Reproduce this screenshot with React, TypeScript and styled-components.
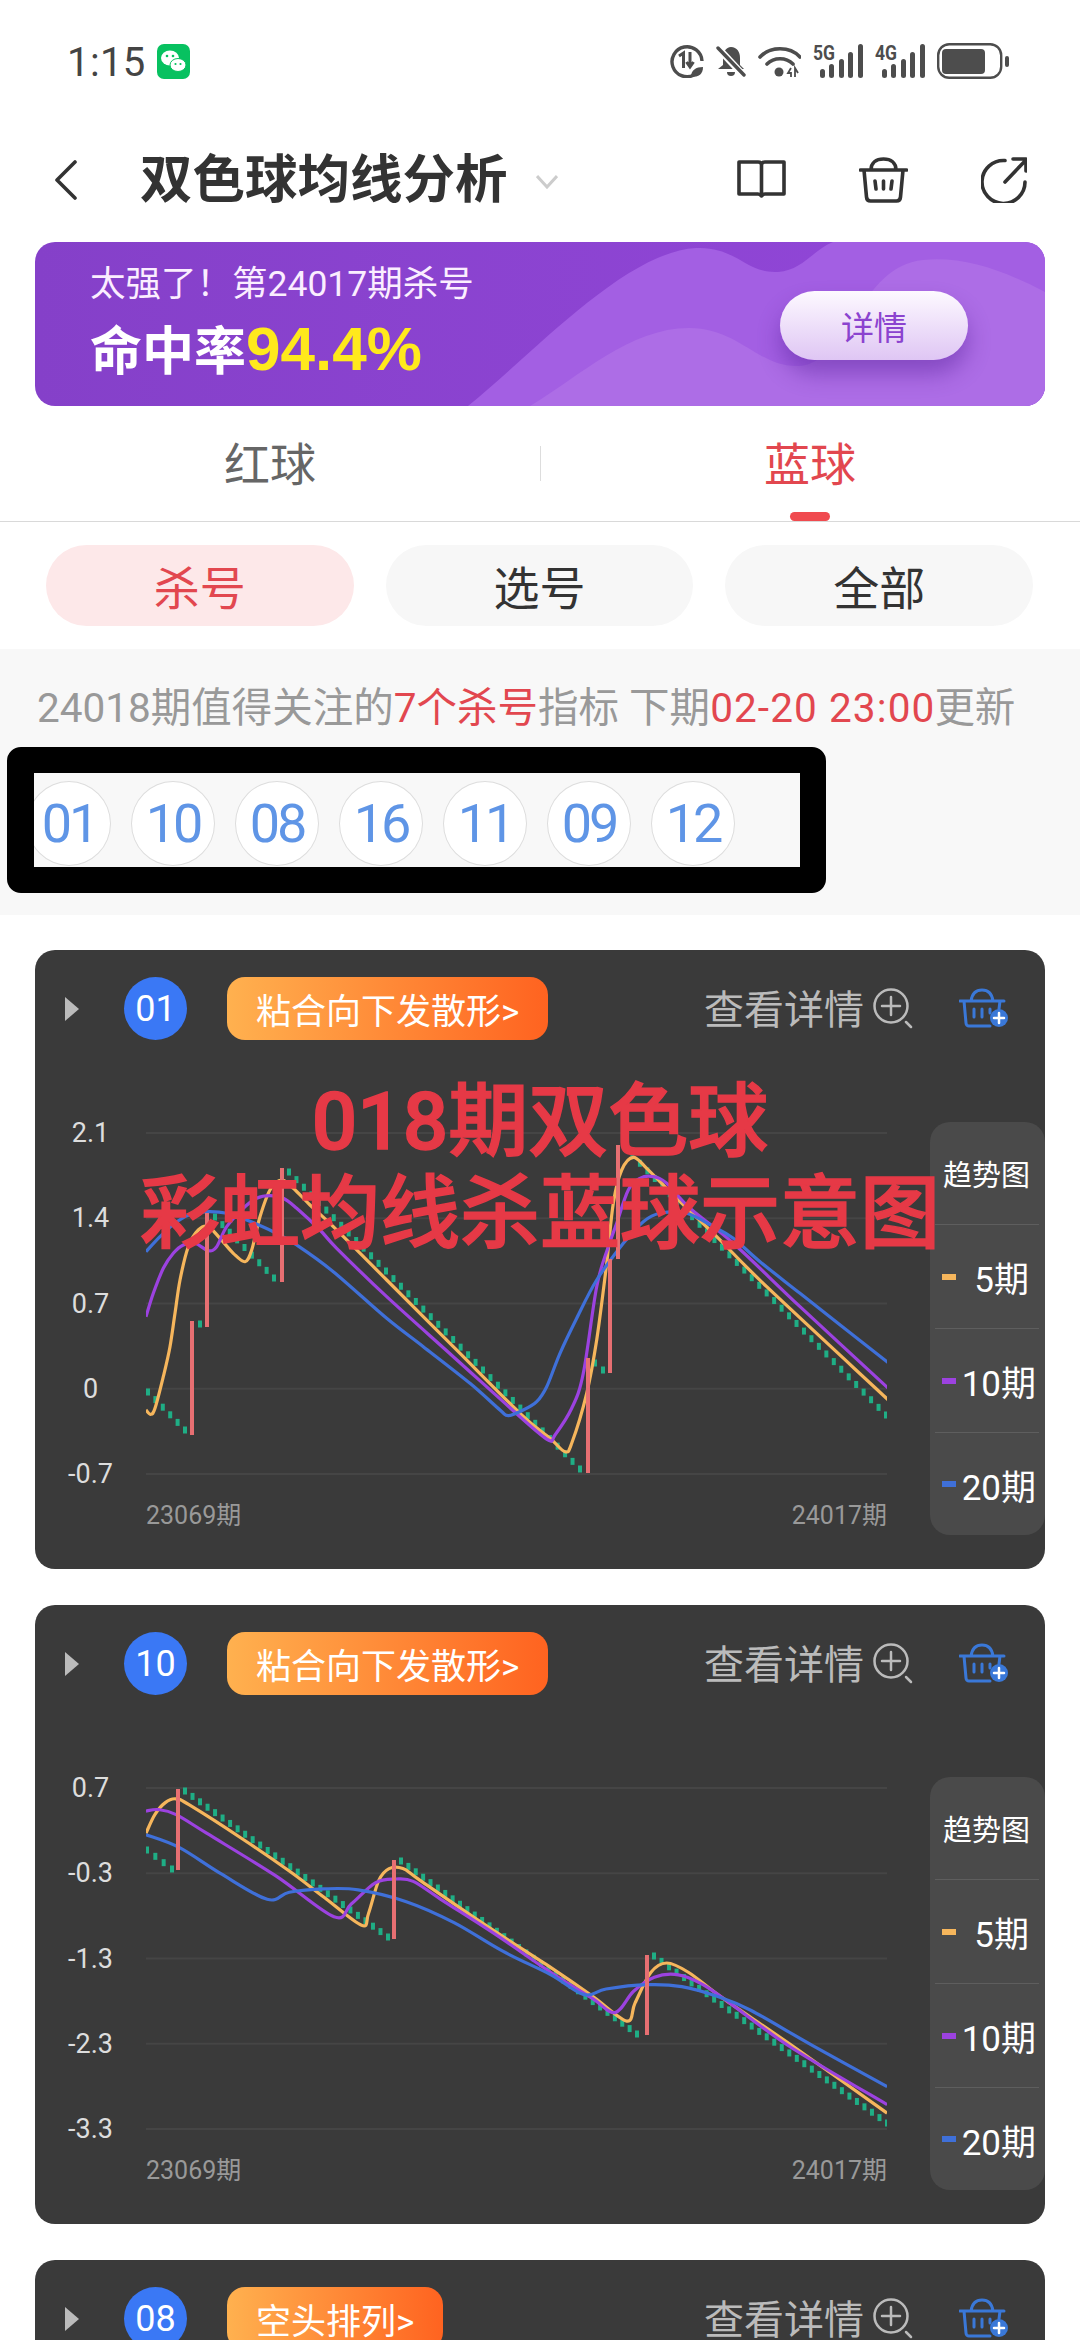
import React from "react";
import styled, { createGlobalStyle } from "styled-components";

const Global = createGlobalStyle`
  html, body { margin: 0; padding: 0; background: #fff; }
  body { width: 1080px; height: 2340px; overflow: hidden; font-family: Roboto, "Noto Sans CJK SC", sans-serif; }
  * { box-sizing: border-box; }
`;

const Page = styled.div`width: 1080px; height: 2340px; overflow: hidden; background: #fff;`;

const StatusBar = styled.div`height: 122px; display: flex; align-items: center; padding: 0 71px 0 67px; color: #444;`;
const Time = styled.span`font-size: 40px; line-height: 1; padding-top: 3px; letter-spacing: .4px;`;
const WeChat = styled.svg`width: 33px; height: 35px; margin-left: 11px; display: block;`;
const StatusIcons = styled.div`margin-left: auto; display: flex; align-items: center; gap: 12px;`;
const Signal = styled.svg`display: block; margin-top: -6px;`;

const Nav = styled.div`height: 120px; display: flex; align-items: center; padding: 0 53px 4px 54px; color: #333;`;
const Title = styled.h1`margin: 0 0 0 62px; font-size: 52.5px; line-height: 60px; font-weight: 700; color: #333;`;
const DownArrow = styled.svg`margin-left: 28px; width: 22px; height: 14px; margin-top: 4px;`;
const NavIcons = styled.div`margin-left: auto; display: flex; align-items: center; gap: 73px;`;

const Banner = styled.div`
  position: relative; height: 164px; margin: 0 35px; border-radius: 20px; overflow: hidden;
  background: linear-gradient(90deg, #8540c9, #9247d9);
`;
const BannerArt = styled.svg`position: absolute; inset: 0; width: 100%; height: 100%;`;
const BannerText = styled.div`position: absolute; left: 55px; top: 21px; color: #fff;`;
const BannerLine = styled.div`font-size: 35.5px; line-height: 42px; color: #fbeeff;`;
const BannerRate = styled.div`font-size: 52px; line-height: 62px; font-weight: 700; margin-top: 13px; color: #fff;`;
const Yellow = styled.span`color: #ffe91c; font-family: "Liberation Sans", sans-serif; font-size: 62px;`;
const BannerButton = styled.div`
  position: absolute; left: 745px; top: 49px; width: 188px; height: 69px; border-radius: 35px;
  display: flex; align-items: center; justify-content: center; color: #8b43cf; font-size: 33px;
  background: linear-gradient(180deg, #fdf9ff, #dfc6f4); box-shadow: 0 14px 22px rgba(84, 30, 150, .45);
`;

const Tabs = styled.div`height: 116px; display: grid; grid-template-columns: 1fr 1fr; border-bottom: 1px solid #d9d9d9; position: relative;`;
const Tab = styled.div<{ $on?: boolean }>`
  position: relative; display: flex; justify-content: center; padding-top: 29px;
  font-size: 46px; line-height: 60px; color: ${p => (p.$on ? "#e2474f" : "#666")};
`;
const TabDivider = styled.i`position: absolute; left: 540px; top: 40px; width: 1px; height: 35px; background: #ddd;`;
const TabMark = styled.i`position: absolute; left: 50%; bottom: 0; transform: translateX(-50%); width: 40px; height: 9px; border-radius: 5px; background: #f04a4f;`;

const Filters = styled.div`display: flex; gap: 32px; padding: 23px 47px 23px 46px;`;
const Filter = styled.div<{ $on?: boolean }>`
  flex: 1; height: 81px; border-radius: 41px; display: flex; align-items: center; justify-content: center;
  font-size: 46px; padding-bottom: 2px; color: ${p => (p.$on ? "#e2474f" : "#333")}; background: ${p => (p.$on ? "#fde8e9" : "#f7f7f7")};
`;

const Notice = styled.section`height: 266px; background: #f8f8f8; padding: 35px 0 0 7px;`;
const NoticeText = styled.div`margin-left: 30px; font-size: 40.5px; line-height: 48px; color: #999; white-space: nowrap;`;
const Red = styled.span`color: #e2474f;`;
const RedTime = styled(Red)`letter-spacing: 1.1px; margin-right: -1px;`;
const Censor = styled.div`
  margin-top: 15px; width: 819px; height: 146px; border: solid #000; border-width: 26px 26px 26px 27px;
  border-radius: 14px; background: #f8f8f8; overflow: hidden;
`;
const Numbers = styled.div`display: flex; gap: 20px; margin: 8px 0 0 -7px;`;
const Num = styled.div`
  width: 84px; height: 85px; flex: none; border-radius: 50%; background: #fff; border: 1px solid #ddd;
  display: flex; align-items: center; justify-content: center; color: #5f95e6; font-size: 54px; letter-spacing: -3px;
`;

const Cards = styled.div`display: flex; flex-direction: column; gap: 36px; padding: 35px 35px 0;`;
const Card = styled.article`
  position: relative; flex: none; background: #3a3a3a; border-radius: 20px; padding: 27px 0 39px;
`;
const CardHead = styled.div`height: 63px; display: flex; align-items: center; padding-left: 30px;`;
const Caret = styled.i`width: 0; height: 0; border-left: 14px solid #bbb; border-top: 12px solid transparent; border-bottom: 12px solid transparent;`;
const Ball = styled.div`
  width: 63px; height: 63px; margin-left: 45px; border-radius: 50%; background: #3a78f5; color: #fff;
  display: flex; align-items: center; justify-content: center; font-size: 36px;
`;
const Tag = styled.div`
  margin-left: 40px; height: 63px; padding: 0 29px; border-radius: 18px; color: #fff; font-size: 35px;
  display: flex; align-items: center; background: linear-gradient(90deg, #ffb14f, #ff6320);
`;
const Detail = styled.div`margin-left: auto; display: flex; align-items: center; color: #bbb; font-size: 40px;`;
const DetailText = styled.span`margin-top: -3px;`;
const HeadIcon = styled.svg`display: block; flex: none;`;
const Basket = styled(HeadIcon)`margin: 0 36px 0 44px;`;
const Zoom = styled(HeadIcon)`margin-left: 9px;`;

const CardBody = styled.div`
  margin-top: 77px; display: grid; grid-template-columns: 111px 741px 43px 115px;
  grid-template-rows: 373px 40px;
`;
const YAxis = styled.div`display: flex; flex-direction: column; justify-content: space-between; align-items: center;`;
const YLabel = styled.div`width: 111px; text-align: center; font-size: 27px; line-height: 32px; color: #ddd;`;
const Chart = styled.svg`display: block; width: 741px; height: 373px;`;
const Legend = styled.aside`
  grid-column: 4; grid-row: 1 / span 2; margin-top: 5px; height: 413px; background: #4a4a4a; border-radius: 20px;
  display: grid; grid-template-rows: 102px 104px 104px 103px; padding: 0 6px 0 5px;
`;
const LegendTitle = styled.div`display: flex; align-items: center; justify-content: center; color: #fff; font-size: 29px; padding-right: 1px;`;
const LegendRow = styled.div`position: relative; display: flex; align-items: center; justify-content: flex-end; border-top: 1px solid #5e5e5e; color: #fff; font-size: 35px; padding-right: 3px;`;
const FiveLabel = styled.span`padding-right: 7px;`;
const Swatch = styled.i<{ $c: string }>`position: absolute; left: 7px; top: 50%; width: 14px; height: 6px; margin-top: -3px; background: ${p => p.$c};`;
const XLabels = styled.div`grid-column: 2; grid-row: 2; margin-top: 12px; display: flex; justify-content: space-between; color: #999; font-size: 25px; line-height: 28px;`;

const Overlay = styled.div`
  position: absolute; left: 0; right: 0; top: 126px; text-align: center; color: #e63946;
  font-size: 80px; line-height: 92px; font-weight: 500; pointer-events: none; white-space: nowrap;
  -webkit-text-stroke: 1.5px #e63946;
`;

type P = number[][];
const z6 = (a: P): P => a.map(([x, y]) => [120 + x / 3 - 146, 1080 + y / 3 - 1117]);
const z7 = (a: P): P => a.map(([x, y]) => [500 + x / 3 - 146, 1080 + y / 3 - 1117]);
const z4 = (a: P): P => a.map(([x, y]) => [x / 1.452 - 146, 1600 + y / 2.119 - 1770]);

const smooth = (p: P) => {
  let d = `M${p[0][0].toFixed(1)} ${p[0][1].toFixed(1)}`;
  for (let i = 0; i < p.length - 1; i++) {
    const a = p[Math.max(i - 1, 0)], b = p[i], c = p[i + 1], e = p[Math.min(i + 2, p.length - 1)];
    d += `C${(b[0] + (c[0] - a[0]) / 6).toFixed(1)} ${(b[1] + (c[1] - a[1]) / 6).toFixed(1)} ${(c[0] - (e[0] - b[0]) / 6).toFixed(1)} ${(c[1] - (e[1] - b[1]) / 6).toFixed(1)} ${c[0].toFixed(1)} ${c[1].toFixed(1)}`;
  }
  return d;
};

interface Data { o: number; yellow: P; purple: P; blue: P; green: number[][]; red: number[][]; labels: string[] }

const card1: Data = {
  o: 1117,
  labels: ["2.1", "1.4", "0.7", "0", "-0.7"],
  yellow: [
    ...z6([[78, 990], [92, 1003], [105, 985], [130, 890], [150, 800], [165, 700], [180, 600], [205, 500], [235, 450], [265, 440], [300, 475], [340, 520], [375, 545], [395, 510], [420, 410], [450, 330], [485, 300], [520, 325], [570, 375], [640, 440], [800, 600], [1000, 800]]),
    ...z7([[60, 1000], [150, 1075], [195, 1115], [215, 1090], [260, 940], [290, 780], [320, 550], [340, 370], [365, 270], [400, 232], [440, 265], [530, 355], [650, 470], [800, 620], [1165, 960]]),
  ],
  purple: [
    ...z6([[78, 710], [100, 640], [130, 565], [160, 520], [190, 495], [225, 490], [265, 512], [290, 500], [320, 440], [370, 385], [410, 355], [450, 347], [490, 355], [530, 385], [600, 450], [650, 505], [800, 650], [1000, 830]]),
    ...z7([[60, 1010], [145, 1080], [165, 1065], [215, 985], [250, 880], [290, 620], [325, 500], [350, 430], [385, 330], [420, 295], [460, 290], [500, 310], [570, 385], [700, 490], [900, 680], [1165, 925]]),
  ],
  blue: [
    ...z6([[78, 515], [120, 470], [170, 425], [220, 400], [270, 395], [320, 400], [380, 420], [460, 455], [530, 495], [640, 575], [800, 715], [910, 800], [1050, 910], [1140, 990], [1165, 1007]]),
    ...z7([[70, 990], [110, 965], [140, 920], [180, 820], [230, 715], [290, 600], [370, 490], [430, 425], [480, 400], [560, 400], [640, 440], [700, 475], [780, 545], [900, 640], [1165, 848]]),
  ],
  green: [[148, 1392, 185, 1430], [200, 1324, 200, 1324], [215, 1217, 274, 1278], [289, 1172, 580, 1469], [595, 1363, 603, 1370], [625, 1148, 886, 1415]],
  red: [[192, 1321, 1435], [207, 1213, 1327], [282, 1168, 1282], [588, 1358, 1473], [610, 1259, 1373], [618, 1145, 1259]],
};

const card2: Data = {
  o: 1770,
  labels: ["0.7", "-0.3", "-1.3", "-2.3", "-3.3"],
  yellow: z4([[212, 490], [225, 450], [240, 425], [255, 417], [275, 430], [350, 500], [420, 570], [470, 625], [525, 685], [535, 660], [550, 590], [565, 565], [585, 565], [610, 590], [700, 680], [800, 775], [860, 835], [910, 888], [922, 850], [945, 785], [968, 765], [1000, 785], [1050, 840], [1150, 940], [1288, 1083]]),
  purple: z4([[212, 443], [230, 440], [255, 450], [300, 490], [400, 580], [485, 667], [510, 640], [545, 595], [575, 587], [600, 592], [640, 630], [720, 705], [800, 785], [860, 840], [893, 870], [920, 825], [950, 795], [985, 790], [1020, 810], [1060, 850], [1150, 945], [1288, 1065]]),
  blue: z4([[212, 493], [260, 520], [320, 575], [388, 630], [420, 615], [470, 608], [520, 610], [590, 635], [660, 680], [730, 740], [800, 790], [848, 832], [880, 820], [940, 811], [990, 815], [1040, 835], [1090, 865], [1180, 940], [1288, 1027]]),
  green: [[147, 1848, 172, 1867], [185, 1789, 388, 1935], [401, 1859, 637, 2032], [654, 1954, 887, 2121]],
  red: [[178, 1787, 1868], [394, 1858, 1937], [647, 1953, 2033]],
};

const ChartSvg = ({ d }: { d: Data }) => {
  const rects: React.ReactNode[] = [];
  d.green.forEach(([x0, y0, x1, y1], r) => {
    const n = Math.max(Math.round((x1 - x0) / 7.43), 0);
    for (let i = 0; i <= n; i++) {
      const t = n ? i / n : 0;
      rects.push(<rect key={`${r}-${i}`} x={x0 + (x1 - x0) * t - 2 - 146} y={y0 + (y1 - y0) * t - 3.5 - d.o} width={4} height={7} fill="#1fae85" />);
    }
  });
  return (
    <Chart viewBox="0 0 741 373">
      {[0, 1, 2, 3, 4].map(i => <line key={i} x1={0} x2={741} y1={16 + i * 85.25} y2={16 + i * 85.25} stroke="#454545" strokeWidth={2} />)}
      {rects}
      <path d={smooth(d.yellow)} fill="none" stroke="#f6b65c" strokeWidth={3.2} />
      <path d={smooth(d.purple)} fill="none" stroke="#9c42e0" strokeWidth={3.2} />
      <path d={smooth(d.blue)} fill="none" stroke="#3f70d9" strokeWidth={3.2} />
      {d.red.map(([x, a, b]) => <rect key={x} x={x - 2 - 146} y={a - d.o} width={4} height={b - a} fill="#e76f72" />)}
    </Chart>
  );
};

const ZoomPlus = () => (
  <Zoom width="42" height="41" viewBox="0 0 42 41" fill="none" stroke="#bbb" strokeWidth="2.5" strokeLinecap="round">
    <circle cx="18" cy="18" r="16.5" /><path d="M18 9v18M9 18h18M33 34l5 5" />
  </Zoom>
);
const BasketPlus = () => (
  <Basket width="50" height="41" viewBox="0 0 50 41" fill="none" stroke="#3a78d8" strokeWidth="3" strokeLinecap="round" strokeLinejoin="round">
    <path d="M1 13h44M5 13l2 22a3 3 0 0 0 3 3h21M41 13l-1 8M12 13c1-7 5-11 11-11s10 4 11 11M15 21v8M23 21v8M31 21v4" />
    <circle cx="40" cy="30" r="9" fill="#3a78d8" stroke="none" />
    <path d="M40 25v10M35 30h10" stroke="#fff" strokeWidth="2.5" />
  </Basket>
);

const ChartCard = ({ n, tag, d, children }: { n: string; tag: string; d?: Data; children?: React.ReactNode }) => (
  <Card>
    <CardHead>
      <Caret />
      <Ball>{n}</Ball>
      <Tag>{tag}</Tag>
      <Detail><DetailText>查看详情</DetailText><ZoomPlus /></Detail>
      <BasketPlus />
    </CardHead>
    {d && (
      <CardBody>
        <YAxis>{d.labels.map(l => <YLabel key={l}>{l}</YLabel>)}</YAxis>
        <ChartSvg d={d} />
        <Legend>
          <LegendTitle>趋势图</LegendTitle>
          <LegendRow><Swatch $c="#f6b65c" /><FiveLabel>5期</FiveLabel></LegendRow>
          <LegendRow><Swatch $c="#9c42e0" />10期</LegendRow>
          <LegendRow><Swatch $c="#3f70d9" />20期</LegendRow>
        </Legend>
        <XLabels><span>23069期</span><span>24017期</span></XLabels>
      </CardBody>
    )}
    {children}
  </Card>
);

export default function App() {
  return (
    <Page>
      <Global />
      <StatusBar>
        <Time>1:15</Time>
        <WeChat viewBox="0 0 33 35">
          <rect width="33" height="35" rx="7" fill="#07c160" />
          <ellipse cx="13" cy="14" rx="9" ry="7.5" fill="#fff" />
          <ellipse cx="21" cy="21" rx="8" ry="6.5" fill="#fff" stroke="#07c160" />
          <circle cx="10" cy="12" r="1.3" fill="#07c160" /><circle cx="16" cy="12" r="1.3" fill="#07c160" />
          <circle cx="18.5" cy="20" r="1.1" fill="#07c160" /><circle cx="23.5" cy="20" r="1.1" fill="#07c160" />
        </WeChat>
        <StatusIcons>
          <svg width="34" height="34" viewBox="0 0 34 34" fill="none" stroke="#4d4d4d">
            <path d="M24 31A15 15 0 1 1 32 17" strokeWidth="3.4" />
            <path d="M9 12l4.500-3v15M20 8v14M16.500 18l3.500 5 3.500-5" strokeWidth="3" />
            <path d="M21 33c0-7 5-10 12-10 0 7-4 10-12 10z" fill="#4d4d4d" stroke="none" />
          </svg>
          <svg width="30" height="34" viewBox="0 0 30 34" fill="#4d4d4d">
            <path d="M15 3c6 0 9 5 9 11v7l4 4H2l5-4v-7c0-6 3-11 8-11z" />
            <path d="M11 28h8a4 4 0 0 1-8 0z" />
            <path d="M1 3l27 29" stroke="#fff" strokeWidth="7" />
            <path d="M2 4l26 27" stroke="#4d4d4d" strokeWidth="3.4" strokeLinecap="round" />
          </svg>
          <svg width="43" height="34" viewBox="0 0 43 34" fill="none" stroke="#4d4d4d" strokeWidth="3.6" strokeLinecap="round">
            <path d="M2 13C12 2 32 2 42 13M9 20c7-7 19-7 26 0" />
            <circle cx="21" cy="28" r="4.500" fill="#4d4d4d" stroke="none" />
            <path d="M33 24l-3 5h3v4M37 33v-9l3 5" strokeWidth="1.800" strokeLinecap="butt" />
          </svg>
          {["5G", "4G"].map(t => (
            <Signal key={t} width="50" height="40" viewBox="0 -6 50 40" fill="#4d4d4d">
              <text x="0" y="16" fontFamily="Roboto" fontWeight="700" fontSize="21" textLength="22" lengthAdjust="spacingAndGlyphs">{t}</text>
              <rect x="7" y="25" width="5" height="9" rx="2.500" /><rect x="16" y="20" width="5" height="14" rx="2.500" />
              <rect x="26" y="15" width="5" height="19" rx="2.500" /><rect x="35" y="8" width="5" height="26" rx="2.500" />
              <rect x="45" y="0" width="5" height="34" rx="2.500" />
            </Signal>
          ))}
          <svg width="72" height="36" viewBox="0 0 72 36" fill="#4d4d4d">
            <rect x="1.200" y="1.200" width="63" height="33.600" rx="11" fill="none" stroke="#4d4d4d" strokeWidth="2.400" />
            <rect x="5" y="6" width="43" height="25" rx="4" />
            <rect x="68" y="13" width="4" height="11" rx="2" />
          </svg>
        </StatusIcons>
      </StatusBar>

      <Nav>
        <svg width="24" height="40" viewBox="0 0 24 40" fill="none" stroke="#333" strokeWidth="3.600" strokeLinecap="round" strokeLinejoin="round"><path d="M21 2L3 20l18 18" /></svg>
        <Title>双色球均线分析</Title>
        <DownArrow viewBox="0 0 22 14" fill="none" stroke="#ccc" strokeWidth="3"><path d="M1 1l10 11L21 1" /></DownArrow>
        <NavIcons>
          <svg width="49" height="40" viewBox="0 0 49 40" fill="none" stroke="#333" strokeWidth="3.600" strokeLinejoin="round"><path d="M2 2h19c2 0 3.500 1 3.500 3v31c-1-1-2-2-3.500-2H2zM47 2H28c-2 0-3.500 1-3.500 3v31c1-1 2-2 3.500-2h19z" /></svg>
          <svg width="49" height="46" viewBox="0 0 49 46" fill="none" stroke="#333" strokeWidth="3.600" strokeLinecap="round" strokeLinejoin="round"><path d="M1.500 13h46M5 13l2.500 27c.2 2.500 1.500 4 4 4h26c2.500 0 3.800-1.500 4-4L44 13M12 13c0-7 5-11 12.500-11S37 6 37 13M16 24l1 8M24.500 24v8M33 24l-1 8" /></svg>
          <svg width="46" height="46" viewBox="0 0 46 46" fill="none" stroke="#333" strokeWidth="3.600" strokeLinecap="round" strokeLinejoin="round"><path d="M24 3.500A21.500 21.500 0 1 0 44 25M24 25L45 3M32 2h13v12" /></svg>
        </NavIcons>
      </Nav>

      <Banner>
        <BannerArt viewBox="0 0 1010 164" preserveAspectRatio="none">
          <path d="M433 164C500 110 590 10 661 6c40-2 50 26 82 24 25-2 35-22 55-30h212v164z" fill="#a35fe3" />
          <path d="M495 164c50-30 100-78 159-78 50 0 70 40 110 38 50-3 60-100 124-106 40-4 80 10 122 32v114z" fill="#ad6de6" />
        </BannerArt>
        <BannerText>
          <BannerLine>太强了！第24017期杀号</BannerLine>
          <BannerRate>命中率<Yellow>94.4%</Yellow></BannerRate>
        </BannerText>
        <BannerButton>详情</BannerButton>
      </Banner>

      <Tabs>
        <Tab>红球</Tab>
        <Tab $on>蓝球<TabMark /></Tab>
        <TabDivider />
      </Tabs>

      <Filters>
        <Filter $on>杀号</Filter>
        <Filter>选号</Filter>
        <Filter>全部</Filter>
      </Filters>

      <Notice>
        <NoticeText>24018期值得关注的<Red>7个杀号</Red>指标 下期<RedTime>02-20 23:00</RedTime>更新</NoticeText>
        <Censor>
          <Numbers>
            {["01", "10", "08", "16", "11", "09", "12"].map(n => <Num key={n}>{n}</Num>)}
          </Numbers>
        </Censor>
      </Notice>

      <Cards>
        <ChartCard n="01" tag="粘合向下发散形>" d={card1}>
          <Overlay>018期双色球<br />彩虹均线杀蓝球示意图</Overlay>
        </ChartCard>
        <ChartCard n="10" tag="粘合向下发散形>" d={card2} />
        <ChartCard n="08" tag="空头排列>" />
      </Cards>
    </Page>
  );
}
